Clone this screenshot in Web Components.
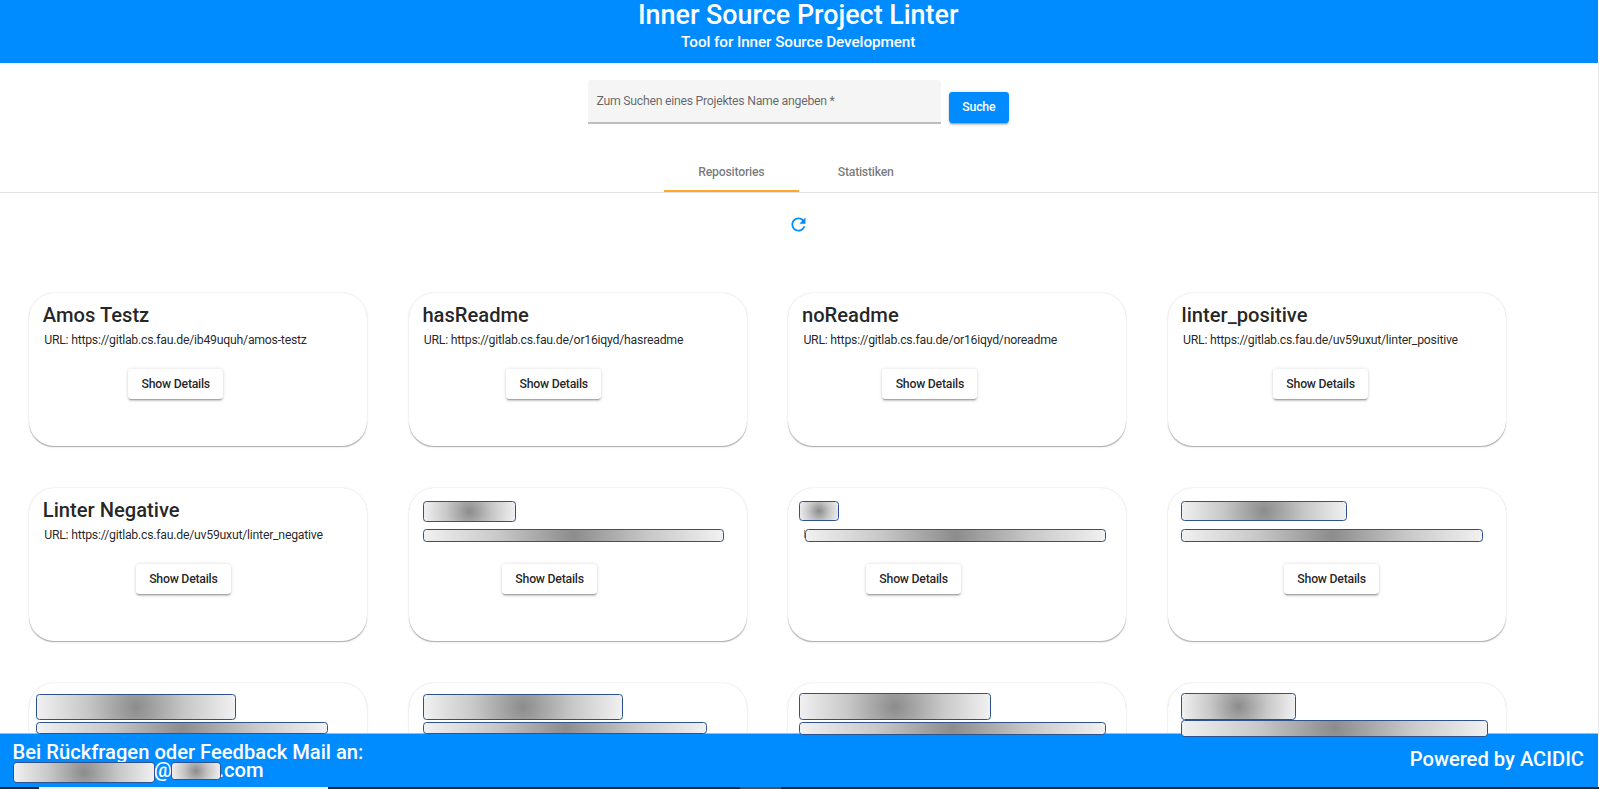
<!DOCTYPE html>
<html lang="de">
<head>
<meta charset="utf-8">
<title>Inner Source Project Linter</title>
<style>
html,body{margin:0;height:100%;overflow:hidden;background:#fff}
body{font-family:Roboto,"Liberation Sans",sans-serif;color:rgba(0,0,0,.87)}
</style>
</head>
<body>
<linter-app></linter-app>
<script>
const define = (name, html, setup) => {
  const tpl = document.createElement('template');
  tpl.innerHTML = html;
  customElements.define(name, class extends HTMLElement {
    constructor() {
      super();
      this.attachShadow({ mode: 'open' }).append(tpl.content.cloneNode(true));
    }
    connectedCallback() { if (setup) setup(this, this.shadowRoot); }
  });
};

define('page-header', `
<style>
:host{display:block;height:63px;padding-right:1.6px;background:#008cff;color:#fff;text-align:center}
h1,h2{margin:0;font-weight:500}
h1{font-size:26.88px;line-height:30px}
h2{font-size:15.3px;line-height:24px;letter-spacing:-.09px}
</style>
<h1>Inner Source Project Linter</h1>
<h2>Tool for Inner Source Development</h2>`);

define('mat-button', `
<style>
:host{display:inline-block}
button{display:block;box-sizing:border-box;height:30.3px;padding:0 13.4px;border:0;border-radius:3.4px;
 font:500 12.3px/30.3px Roboto,sans-serif;letter-spacing:-.25px;color:var(--fg,rgba(0,0,0,.87));background:var(--bg,#fff);white-space:nowrap;
 box-shadow:0 2.5px .9px -1.7px rgba(0,0,0,.2),0 1.7px 1.7px rgba(0,0,0,.14),0 .8px 4.2px rgba(0,0,0,.12)}
</style>
<button><slot></slot></button>`);

define('search-bar', `
<style>
:host{display:flex;justify-content:center;gap:8px;padding:17px 1.4px 0 0;height:62px}
.field{box-sizing:border-box;width:353px;height:44px;background:#f5f5f5;border-radius:3.4px 3.4px 0 0;
 border-bottom:2px solid #bdbdbd;padding:13px 8.6px 0;font-size:12.3px;letter-spacing:-.28px;line-height:16px;color:rgba(0,0,0,.6)}
mat-button{--bg:#008cff;--fg:#fff;margin-top:12.3px}
</style>
<div class="field">Zum Suchen eines Projektes Name angeben *</div>
<mat-button>Suche</mat-button>`);

define('tab-bar', `
<style>
:host{display:flex;justify-content:center;margin-top:10px;padding-right:1px;height:40px;border-bottom:1px solid #e0e0e0}
div{box-sizing:border-box;width:134.4px;height:40px;text-align:center;font-weight:500;font-size:12.3px;letter-spacing:-.25px;line-height:40px;color:rgba(0,0,0,.54)}
.on{border-bottom:2px solid #ffa726}
</style>
<div class="on">Repositories</div><div>Statistiken</div>`);

define('refresh-icon', `
<style>
:host{display:flex;justify-content:center;padding:21px 2px 0 0}
svg{display:block;width:21px;height:21px;fill:#008cff}
</style>
<svg viewBox="0 0 24 24"><path d="M17.65 6.35C16.2 4.9 14.21 4 12 4c-4.42 0-7.99 3.58-7.99 8s3.57 8 7.99 8c3.73 0 6.84-2.55 7.73-6h-2.08c-.82 2.33-3.04 4-5.65 4-3.31 0-6-2.69-6-6s2.69-6 6-6c1.66 0 3.14.69 4.22 1.78L13 11h7V4l-2.35 2.35z"/></svg>`);

define('redacted-box', `
<style>
:host{display:block;box-sizing:border-box;position:relative;z-index:3;border:1px solid #2f528f;border-radius:3.5px;
 background:radial-gradient(circle farthest-corner,#8c8c8c 0%,#c8c8c8 50%,#f1f1f1 100%)}
</style>`, (el) => {
  el.style.width = el.getAttribute('w') + 'px';
  el.style.height = el.getAttribute('h') + 'px';
});

define('repo-card', `
<style>
:host{display:block;box-sizing:border-box;height:153px;border-radius:25.2px;background:#fff;
 box-shadow:0 1.7px .9px -.9px rgba(0,0,0,.18),0 .9px .9px rgba(0,0,0,.1),0 .9px 2.6px rgba(0,0,0,.1)}
.text{height:76px;overflow:visible;display:flow-root}
::slotted(h3){margin:10.3px 0 0 13.6px;font-weight:500;font-size:20.16px;line-height:25px}
::slotted(p){margin:4px 0 0 15px;font-size:12.3px;letter-spacing:-.25px;line-height:16px;white-space:nowrap}
mat-button{margin-left:var(--x)}
</style>
<div class="text"><slot></slot></div>
<mat-button>Show Details</mat-button>`, (el) => {
  el.style.setProperty('--x', (el.getAttribute('x') || 90) + 'px');
});

define('card-grid', `
<style>
:host{display:grid;grid-template-columns:repeat(4,338px);column-gap:41.6px;row-gap:42px;padding:58px 0 0 29.2px}
redacted-box{margin-left:var(--l);margin-top:var(--t)}
.cut::before{content:"";position:absolute;left:-2px;top:0;width:1px;height:8px;background:#b98a68}
</style>
<repo-card x="99"><h3>Amos Testz</h3><p>URL: https://gitlab.cs.fau.de/ib49uquh/amos-testz</p></repo-card>
<repo-card x="97.4"><h3>hasReadme</h3><p>URL: https://gitlab.cs.fau.de/or16iqyd/hasreadme</p></repo-card>
<repo-card x="93.9"><h3>noReadme</h3><p>URL: https://gitlab.cs.fau.de/or16iqyd/noreadme</p></repo-card>
<repo-card x="105"><h3>linter_positive</h3><p>URL: https://gitlab.cs.fau.de/uv59uxut/linter_positive</p></repo-card>

<repo-card x="106.6"><h3>Linter Negative</h3><p>URL: https://gitlab.cs.fau.de/uv59uxut/linter_negative</p></repo-card>
<repo-card x="93.2"><redacted-box w="93" h="21" style="--l:14.2px;--t:13px"></redacted-box><redacted-box w="301" h="13" style="--l:14.2px;--t:7px"></redacted-box></repo-card>
<repo-card x="77.6"><redacted-box w="40" h="20" style="--l:10.6px;--t:13px"></redacted-box><redacted-box class="cut" w="301" h="13" style="--l:16.6px;--t:8px"></redacted-box></repo-card>
<repo-card x="116"><redacted-box w="166" h="20" style="--l:13px;--t:13px"></redacted-box><redacted-box w="302" h="13" style="--l:13px;--t:8px"></redacted-box></repo-card>

<repo-card><redacted-box w="200" h="26" style="--l:6.8px;--t:11px"></redacted-box><redacted-box w="292" h="12" style="--l:6.8px;--t:2px"></redacted-box></repo-card>
<repo-card><redacted-box w="200" h="26" style="--l:14.2px;--t:11px"></redacted-box><redacted-box w="284" h="12" style="--l:14.2px;--t:2px"></redacted-box></repo-card>
<repo-card><redacted-box w="192" h="27" style="--l:10.6px;--t:10px"></redacted-box><redacted-box w="307" h="13" style="--l:10.6px;--t:2px"></redacted-box></repo-card>
<repo-card><redacted-box w="115" h="27" style="--l:13px;--t:10px"></redacted-box><redacted-box w="307" h="17" style="--l:13px;--t:0px"></redacted-box></repo-card>`);

define('page-footer', `
<style>
:host{display:block;position:relative;z-index:2;height:56px;color:#fff;font-weight:500;font-size:20.16px}
.bar{box-sizing:border-box;height:54px;width:1598px;background:#008cff;border-top:1px solid #80c4ff;display:flex;justify-content:space-between;align-items:flex-start;padding:0 14px 0 12.6px}
.l1{line-height:24px;padding-top:6px}
.mail{display:flex;height:21px;line-height:20px;margin-top:-2px;padding-left:.6px}
.mail span{line-height:17px}
.right{line-height:24px;padding-top:13.4px}
.edge{height:2px;display:flex;background:#22252a}
.edge i:nth-child(1){width:39px}
.edge i:nth-child(2){width:289px;background:#f1f1f1}
.edge i:nth-child(3){width:412px}
.edge i:nth-child(4){width:41px;background:#4d5156}
</style>
<div class="bar">
 <div><div class="l1">Bei Rückfragen oder Feedback Mail an:</div>
 <div class="mail"><redacted-box w="142" h="21"></redacted-box><span style="margin-left:-1.5px">@</span><redacted-box w="50" h="18" style="margin-left:-1px"></redacted-box><span style="margin-left:-2.4px">.com</span></div></div>
 <div class="right">Powered by ACIDIC</div>
</div>
<div class="edge"><i></i><i></i><i></i><i></i></div>`);

define('linter-app', `
<style>
:host{display:flex;flex-direction:column;height:789px;overflow:hidden}
main{flex:1;min-height:0;box-sizing:border-box;border-right:1px solid #e8e8e8}
page-header{margin-right:1px}
</style>
<page-header></page-header>
<main><search-bar></search-bar><tab-bar></tab-bar><refresh-icon></refresh-icon><card-grid></card-grid></main>
<page-footer></page-footer>`);
</script>
</body>
</html>
